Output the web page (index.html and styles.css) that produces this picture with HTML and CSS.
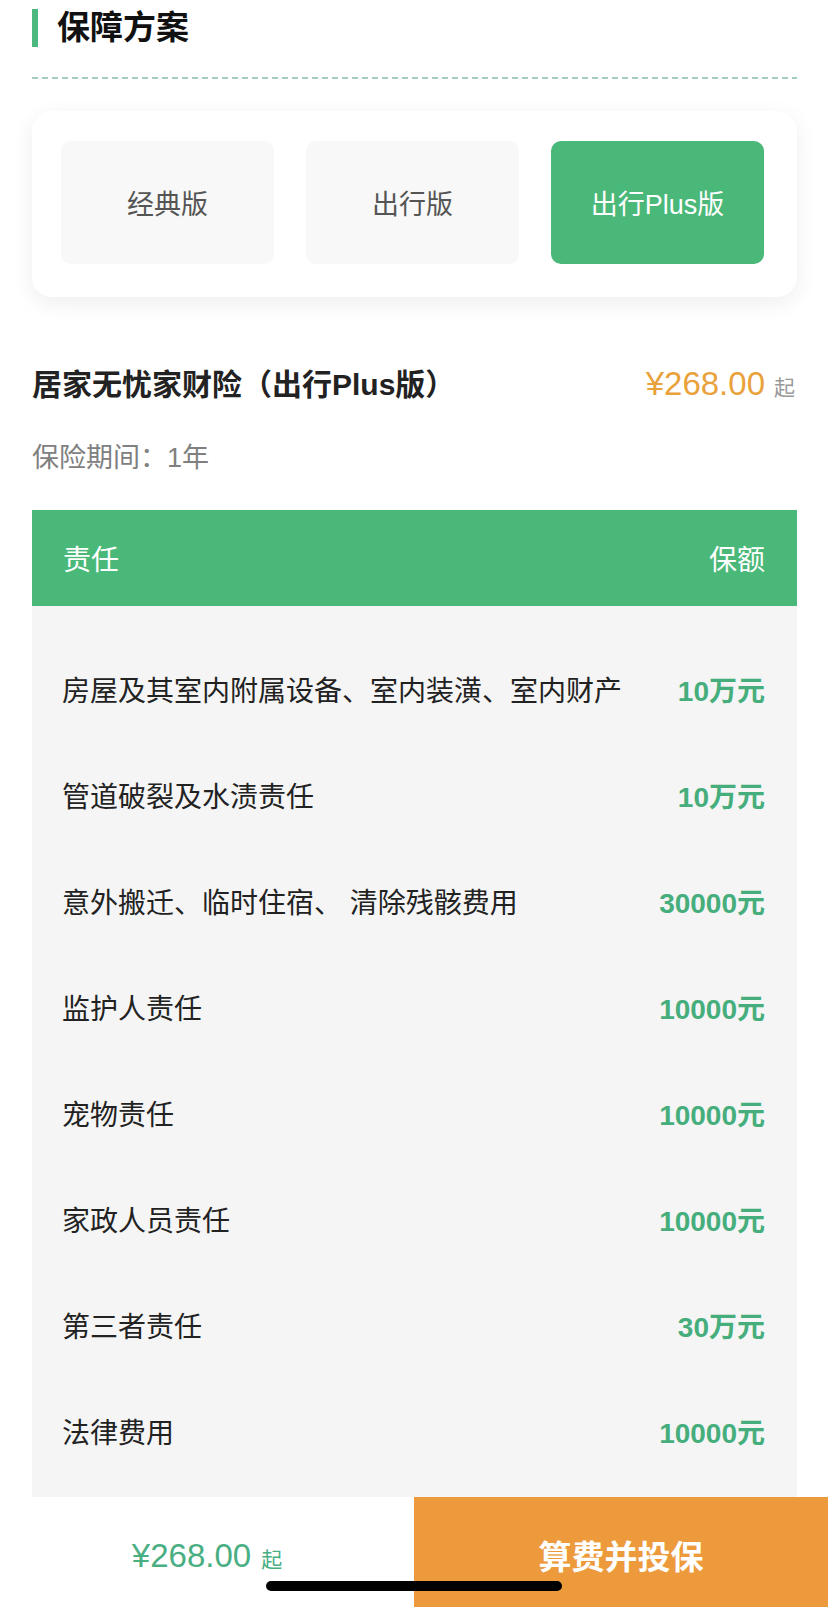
FILE: index.html
```html
<!DOCTYPE html>
<html lang="zh-CN">

<head>
    <meta charset="UTF-8">
    <meta name="viewport" content="width=device-width, initial-scale=1.0">
    <title>保障方案</title>
    <link rel="stylesheet" href="styles.css">
</head>

<body>

    <div class="pagina">
        <!-- Título de sección -->
        <div class="tituloSeccion">
            <span class="barraTitulo"></span>
            <h2>保障方案</h2>
        </div>
        <div class="lineaPunteada"></div>

        <!-- Selector de versiones -->
        <div class="tarjetaPlanes">
            <div class="plan">经典版</div>
            <div class="plan">出行版</div>
            <div class="plan activo">出行Plus版</div>
        </div>

        <div class="productoFila">
            <div class="productoNombre">居家无忧家财险（出行Plus版）</div>
            <div class="productoPrecio">¥268.00<span class="qi">起</span></div>
        </div>
        <div class="periodo">保险期间：1年</div>

        <!-- Tabla de coberturas -->
        <div class="tabla">
            <div class="tablaCabecera">
                <span>责任</span>
                <span>保额</span>
            </div>
            <div class="tablaCuerpo">
                <div class="fila"><span class="nombre">房屋及其室内附属设备、室内装潢、室内财产</span><span class="monto">10万元</span></div>
                <div class="fila"><span class="nombre">管道破裂及水渍责任</span><span class="monto">10万元</span></div>
                <div class="fila"><span class="nombre">意外搬迁、临时住宿、 清除残骸费用</span><span class="monto">30000元</span></div>
                <div class="fila"><span class="nombre">监护人责任</span><span class="monto">10000元</span></div>
                <div class="fila"><span class="nombre">宠物责任</span><span class="monto">10000元</span></div>
                <div class="fila"><span class="nombre">家政人员责任</span><span class="monto">10000元</span></div>
                <div class="fila"><span class="nombre">第三者责任</span><span class="monto">30万元</span></div>
                <div class="fila"><span class="nombre">法律费用</span><span class="monto">10000元</span></div>
            </div>
        </div>
    </div>

    <!-- Barra inferior fija -->
    <div class="barraInferior">
        <div class="precioInferior">¥268.00<span class="qi">起</span></div>
        <div class="botonComprar">算费并投保</div>
    </div>
    <div class="indicadorInicio"></div>

</body>

</html>
```

FILE: styles.css
```css
body {
    margin: 0;
    background-color: #ffffff;
    font-family: 'Liberation Sans', 'Noto Sans CJK SC', sans-serif;
    color: #222222;
}

.pagina {
    padding: 9px 31px 0 32px;
}

.tituloSeccion {
    display: flex;
    align-items: center;
    height: 38px;
}

.barraTitulo {
    width: 6px;
    height: 38px;
    background-color: #4cb77e; /* Verde */
    margin-right: 19px;
}

.tituloSeccion h2 {
    margin: 0;
    font-size: 33px;
    line-height: 38px;
    font-weight: bold;
    color: #111111;
}

.lineaPunteada {
    margin-top: 30px;
    height: 2px;
    background-image: repeating-linear-gradient(90deg, #a3cdbf 0, #a3cdbf 6px, transparent 6px, transparent 10px);
}

.tarjetaPlanes {
    margin-top: 32px;
    display: flex;
    gap: 32px;
    padding: 30px 33px 33px 29px;
    background-color: #ffffff;
    border-radius: 20px;
    box-shadow: 0 6px 22px rgba(0, 0, 0, 0.07); /* Sombra suave */
}

.plan {
    flex: 1;
    height: 123px;
    display: flex;
    align-items: center;
    justify-content: center;
    background-color: #f8f8f8;
    border-radius: 10px;
    font-size: 27px;
    color: #555555;
}

.plan.activo {
    background-color: #4ab879; /* Verde activo */
    color: #ffffff;
}

.productoFila {
    margin-top: 67px;
    display: flex;
    justify-content: space-between;
    align-items: baseline;
    line-height: 40px;
    padding-right: 2px;
}

.productoNombre {
    font-size: 30px;
    font-weight: bold;
    color: #222222;
}

.productoPrecio {
    font-size: 33px;
    color: #e9a23b; /* Naranja */
}

.qi {
    font-size: 21px;
    color: #999999;
    margin-left: 9px;
}

.periodo {
    margin-top: 30px;
    font-size: 27px;
    line-height: 40px;
    color: #808080;
}

.tabla {
    margin-top: 32px;
}

.tablaCabecera {
    height: 96px;
    display: flex;
    align-items: center;
    justify-content: space-between;
    padding: 0 32px 0 31px;
    background-color: #4ab879;
    color: #ffffff;
    font-size: 28px;
}

.tablaCuerpo {
    background-color: #f5f5f5;
    padding: 30px 32px 140px 30px;
}

.fila {
    display: flex;
    align-items: center;
    justify-content: space-between;
    height: 106px;
}

.nombre {
    font-size: 28px;
    color: #222222;
}

.monto {
    font-size: 28px;
    font-weight: bold;
    color: #46ae7c; /* Verde texto */
}

.barraInferior {
    position: fixed;
    left: 0;
    right: 0;
    bottom: 0;
    height: 110px;
    display: flex;
}

.precioInferior {
    flex: 1;
    display: flex;
    align-items: baseline;
    justify-content: center;
    padding-top: 40px;
    box-sizing: border-box;
    background-color: #ffffff;
    font-size: 33px;
    color: #4aae83;
}

.precioInferior .qi {
    color: #4aae83;
    margin-left: 10px;
}

.botonComprar {
    flex: 1;
    display: flex;
    align-items: center;
    justify-content: center;
    padding-top: 6px;
    background-color: #ec9a3b; /* Naranja botón */
    color: #ffffff;
    font-size: 33px;
    font-weight: bold;
}

.indicadorInicio {
    position: fixed;
    left: 266px;
    bottom: 16px;
    width: 296px;
    height: 10px;
    border-radius: 5px;
    background-color: #000000;
}
```
